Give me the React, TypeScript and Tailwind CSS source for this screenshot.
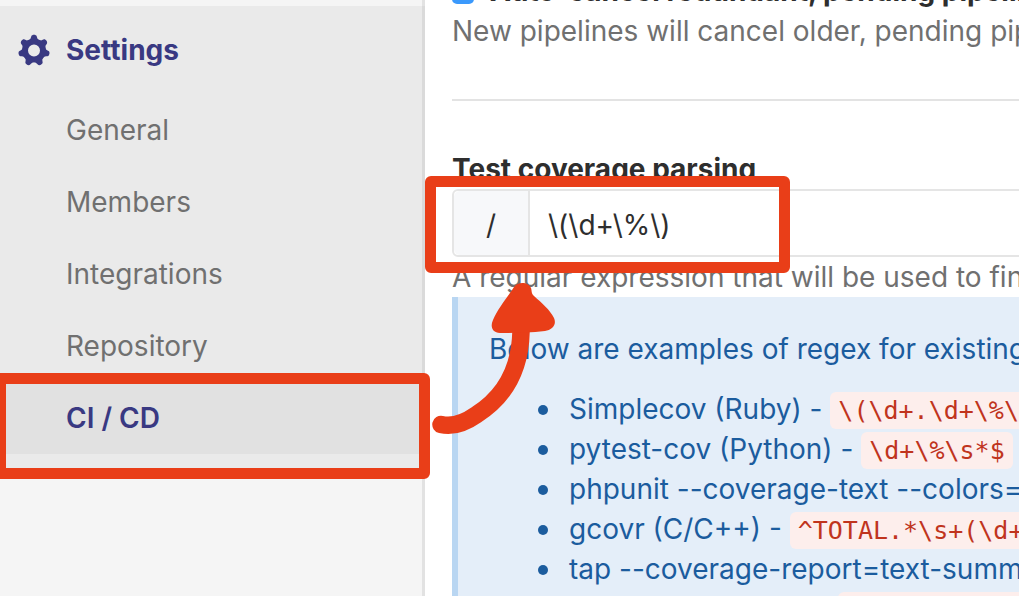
import { useId } from "react";

const links = ["General", "Members", "Integrations", "Repository", "CI / CD"];

const examples: { tool: string; regex: string }[] = [
  { tool: "Simplecov (Ruby)", regex: "\\(\\d+.\\d+\\%\\) covered" },
  { tool: "pytest-cov (Python)", regex: "\\d+\\%\\s*$" },
  { tool: "phpunit --coverage-text --colors=never (PHP)", regex: "^\\s*Lines:\\s*\\d+.\\d+\\%" },
  { tool: "gcovr (C/C++)", regex: "^TOTAL.*\\s+(\\d+\\%)$" },
  { tool: "tap --coverage-report=text-summary (NodeJS)", regex: "^Statements\\s*:\\s*([^%]+)" },
  { tool: "excoveralls (Elixir)", regex: "\\[TOTAL\\]\\s+(\\d+\\.\\d+)%" },
];

const teeth = [0, 1, 2, 3, 4, 5, 6].map((n) => (n * 360) / 7);

function Gear() {
  return (
    <svg viewBox="0 0 32 32" className="size-8 shrink-0" fill="none" aria-hidden="true">
      <circle cx="16" cy="16.5" r="9" stroke="#393982" strokeWidth="6" />
      {teeth.map((angle) => (
        <path
          key={angle}
          d="M10.6 7C12.6 5.4 12.9 3.6 13.3 2.2C13.9 0.2 18.1 0.2 18.7 2.2C19.1 3.6 19.4 5.4 21.4 7L19.5 9H12.5Z"
          fill="#393982"
          transform={`rotate(${angle} 16 16.5)`}
        />
      ))}
    </svg>
  );
}

function Sidebar() {
  return (
    <aside className="w-[425px] shrink-0 border-r-3 border-[#e2e2e2] bg-[#f5f5f5] pt-1.5">
      <nav className="-mr-[3px] border-r-3 border-[#dadada] bg-[#eaeaea] pb-4">
        <a href="#settings" className="flex h-22 items-center gap-4 pl-[18px] font-bold text-[#393982]">
          <Gear />
          Settings
        </a>
        <ul>
          {links.map((label) => (
            <li key={label}>
              <a
                href="#section"
                className={
                  label === "CI / CD"
                    ? "flex h-18 items-center bg-[#e1e1e1] pl-[66px] font-semibold text-[#393982]"
                    : "flex h-18 items-center pl-[66px] text-[#707070]"
                }
              >
                {label}
              </a>
            </li>
          ))}
        </ul>
      </nav>
    </aside>
  );
}

function CoverageForm() {
  const cancelId = useId();
  const regexId = useId();
  return (
    <main className="-mt-[29px] min-w-0 flex-1 pl-[27px] leading-10 whitespace-nowrap text-[#2e2e2e]">
      <div className="flex items-center gap-4">
        <input
          id={cancelId}
          type="checkbox"
          defaultChecked
          className="mt-1 size-[22px] shrink-0 appearance-none rounded-[5px] bg-[#3b99fc]"
        />
        <label htmlFor={cancelId} className="font-bold">
          Auto-cancel redundant, pending pipelines
        </label>
      </div>
      <p className="text-[#707070]">New pipelines will cancel older, pending pipelines on the same branch</p>
      <hr className="my-12 border-t-2 border-[#e3e3e3]" />
      <label htmlFor={regexId} className="block font-bold">
        Test coverage parsing
      </label>
      <div className="-mr-4 flex h-17 rounded-md border-2 border-[#e5e5e5]">
        <span className="flex w-[76px] shrink-0 items-center justify-center rounded-l-md border-r-2 border-[#e5e5e5] bg-[#f7f8fa] pt-1">
          /
        </span>
        <input
          id={regexId}
          type="text"
          defaultValue={"\\(\\d+\\%\\)"}
          className="min-w-0 flex-1 pt-1 pl-[18px] outline-none"
        />
      </div>
      <p className="text-[#707070]">A regular expression that will be used to find the test coverage output</p>
      <section className="border-l-6 border-[#b9d6f2] bg-[#e4eef9] pt-8 pl-[31px] text-[#1b5c9e]">
        <p className="mb-5">Below are examples of regex for existing tools:</p>
        <ul className="pl-12">
          {examples.map(({ tool, regex }) => (
            <li
              key={tool}
              className="flex h-10 items-center before:mt-0.5 before:mr-[21px] before:ml-px before:size-2.5 before:shrink-0 before:rounded-full before:bg-[#1b5c9e]"
            >
              <span>
                {tool} -{" "}
                <code className="rounded-md bg-[#fdeeec] px-2 py-1 font-['DejaVu_Sans_Mono',monospace] text-[25px] leading-none text-[#c0341d]">
                  {regex}
                </code>
              </span>
            </li>
          ))}
        </ul>
      </section>
    </main>
  );
}

function Annotations() {
  return (
    <div className="pointer-events-none absolute inset-0">
      <div className="absolute top-[373px] -left-[5px] h-[106px] w-[435px] rounded-md border-11 border-[#e93e18]" />
      <div className="absolute top-[176px] left-[425px] h-[97px] w-[365px] rounded-md border-11 border-[#e93e18]" />
      <svg viewBox="0 0 130 160" className="absolute top-[280px] left-[430px] h-[160px] w-[130px]" fill="none">
        <path
          d="M11 144.500C24 147.500 36 142 46 135C73 118 90 91 91 52"
          stroke="#e93e18"
          strokeWidth="17.500"
          strokeLinecap="round"
        />
        <path
          d="M84 7C87 2 98 1 101 8C102 11 101 13 104 16C112 23 120 30 124 38C127 45 122 50 115 51C99 53 83 53 70 53C62 53 60 46 63 40C68 28 77 18 84 7Z"
          fill="#e93e18"
        />
      </svg>
    </div>
  );
}

export default function App() {
  return (
    <div className="relative flex h-screen overflow-hidden bg-white font-[Inter,sans-serif] text-[28px]">
      <Sidebar />
      <CoverageForm />
      <Annotations />
    </div>
  );
}
